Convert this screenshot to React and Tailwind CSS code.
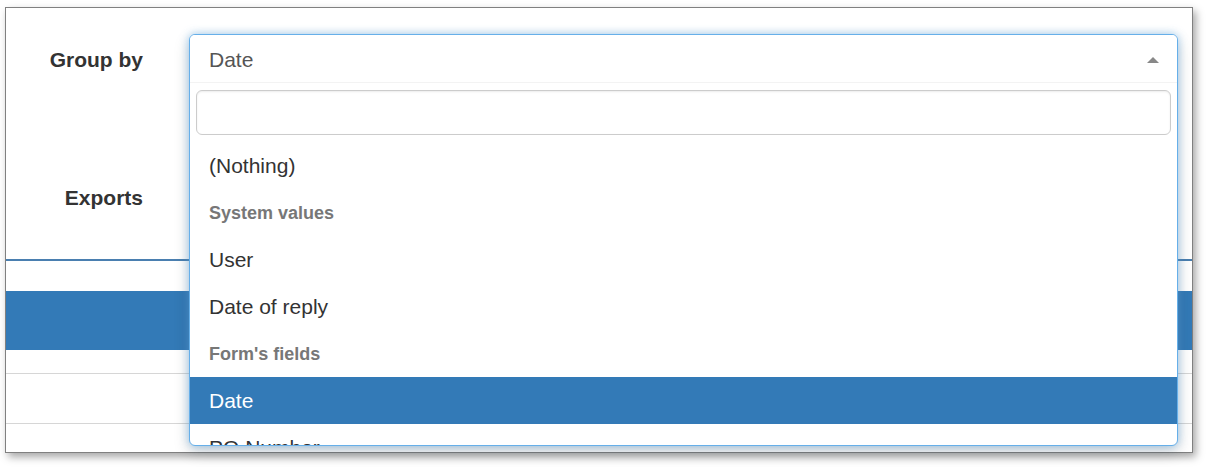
const options = [
    { label: "(Nothing)", type: "option" },
    { label: "System values", type: "header" },
    { label: "User", type: "option" },
    { label: "Date of reply", type: "option" },
    { label: "Form's fields", type: "header" },
    { label: "Date", type: "option", selected: true },
    { label: "PO Number", type: "option" },
];

const GroupByDropdown = () => {
    return (
        <div className="absolute left-[183px] top-[26px] w-[989px] h-[412px] flex flex-col overflow-hidden rounded-[6px] border border-[#66afe9] bg-white shadow-[0_0_8px_rgba(102,175,233,0.6),0_6px_16px_rgba(0,0,0,0.18)]">
            {/* Button */}
            <div className="flex h-[48px] shrink-0 items-center justify-between border-b border-[#f3f3f3] bg-white pl-[19px] pr-[18px] pt-[2px] text-[21px] text-[#555]">
                <span>Date</span>
                <span className="block h-0 w-0 border-x-[6px] border-b-[6px] border-x-transparent border-b-[#888]" />
            </div>

            {/* Search */}
            <div className="shrink-0 px-[6px] pt-[7px] pb-[7px]">
                <input
                    type="text"
                    className="block h-[45px] w-full rounded-[6px] border border-[#ccc] px-3 text-[21px] shadow-[inset_0_1px_2px_rgba(0,0,0,0.075)] outline-none"
                />
            </div>

            {/* Options */}
            <ul className="flex flex-col">
                {options.map((opt, i) =>
                    opt.type === "header" ? (
                        <li
                            key={i}
                            className="flex h-[47px] shrink-0 items-center pl-[19px] pt-[2px] text-[18px] font-bold text-[#777]"
                        >
                            {opt.label}
                        </li>
                    ) : (
                        <li
                            key={i}
                            className={
                                opt.selected
                                    ? "flex h-[47px] shrink-0 items-center bg-[#337ab7] pl-[19px] pt-[1px] text-[21px] text-white"
                                    : "flex h-[47px] shrink-0 items-center pl-[19px] pt-[1px] text-[21px] text-[#333]"
                            }
                        >
                            {opt.label}
                        </li>
                    )
                )}
            </ul>
        </div>
    );
};

export default function App() {
    return (
        <div className="min-h-[467px] w-[1212px] bg-white pl-[5px] pt-[7px] font-['Liberation_Sans',Arial,sans-serif]">
            <div className="relative flex h-[446px] w-[1188px] flex-col border border-[#808080] bg-white shadow-[3px_4px_8px_rgba(0,0,0,0.35)]">
                {/* Form */}
                <div className="flex h-[251px] flex-col pt-[26px]">
                    <div className="flex h-[52px] items-center">
                        <label className="w-[137px] text-right text-[21px] font-bold text-[#333]">
                            Group by
                        </label>
                    </div>
                    <div className="mt-[86px] flex h-[52px] items-center">
                        <label className="w-[137px] text-right text-[21px] font-bold text-[#333]">
                            Exports
                        </label>
                    </div>
                </div>

                {/* Table behind */}
                <div className="h-[2px] bg-[#4a7fb0]" />
                <div className="h-[30px]" />
                <div className="h-[59px] bg-[#337ab7]" />
                <div className="h-[23px]" />
                <div className="h-[1px] bg-[#d6d6d6]" />
                <div className="h-[49px]" />
                <div className="h-[1px] bg-[#d6d6d6]" />

                <GroupByDropdown />
            </div>
        </div>
    );
}
